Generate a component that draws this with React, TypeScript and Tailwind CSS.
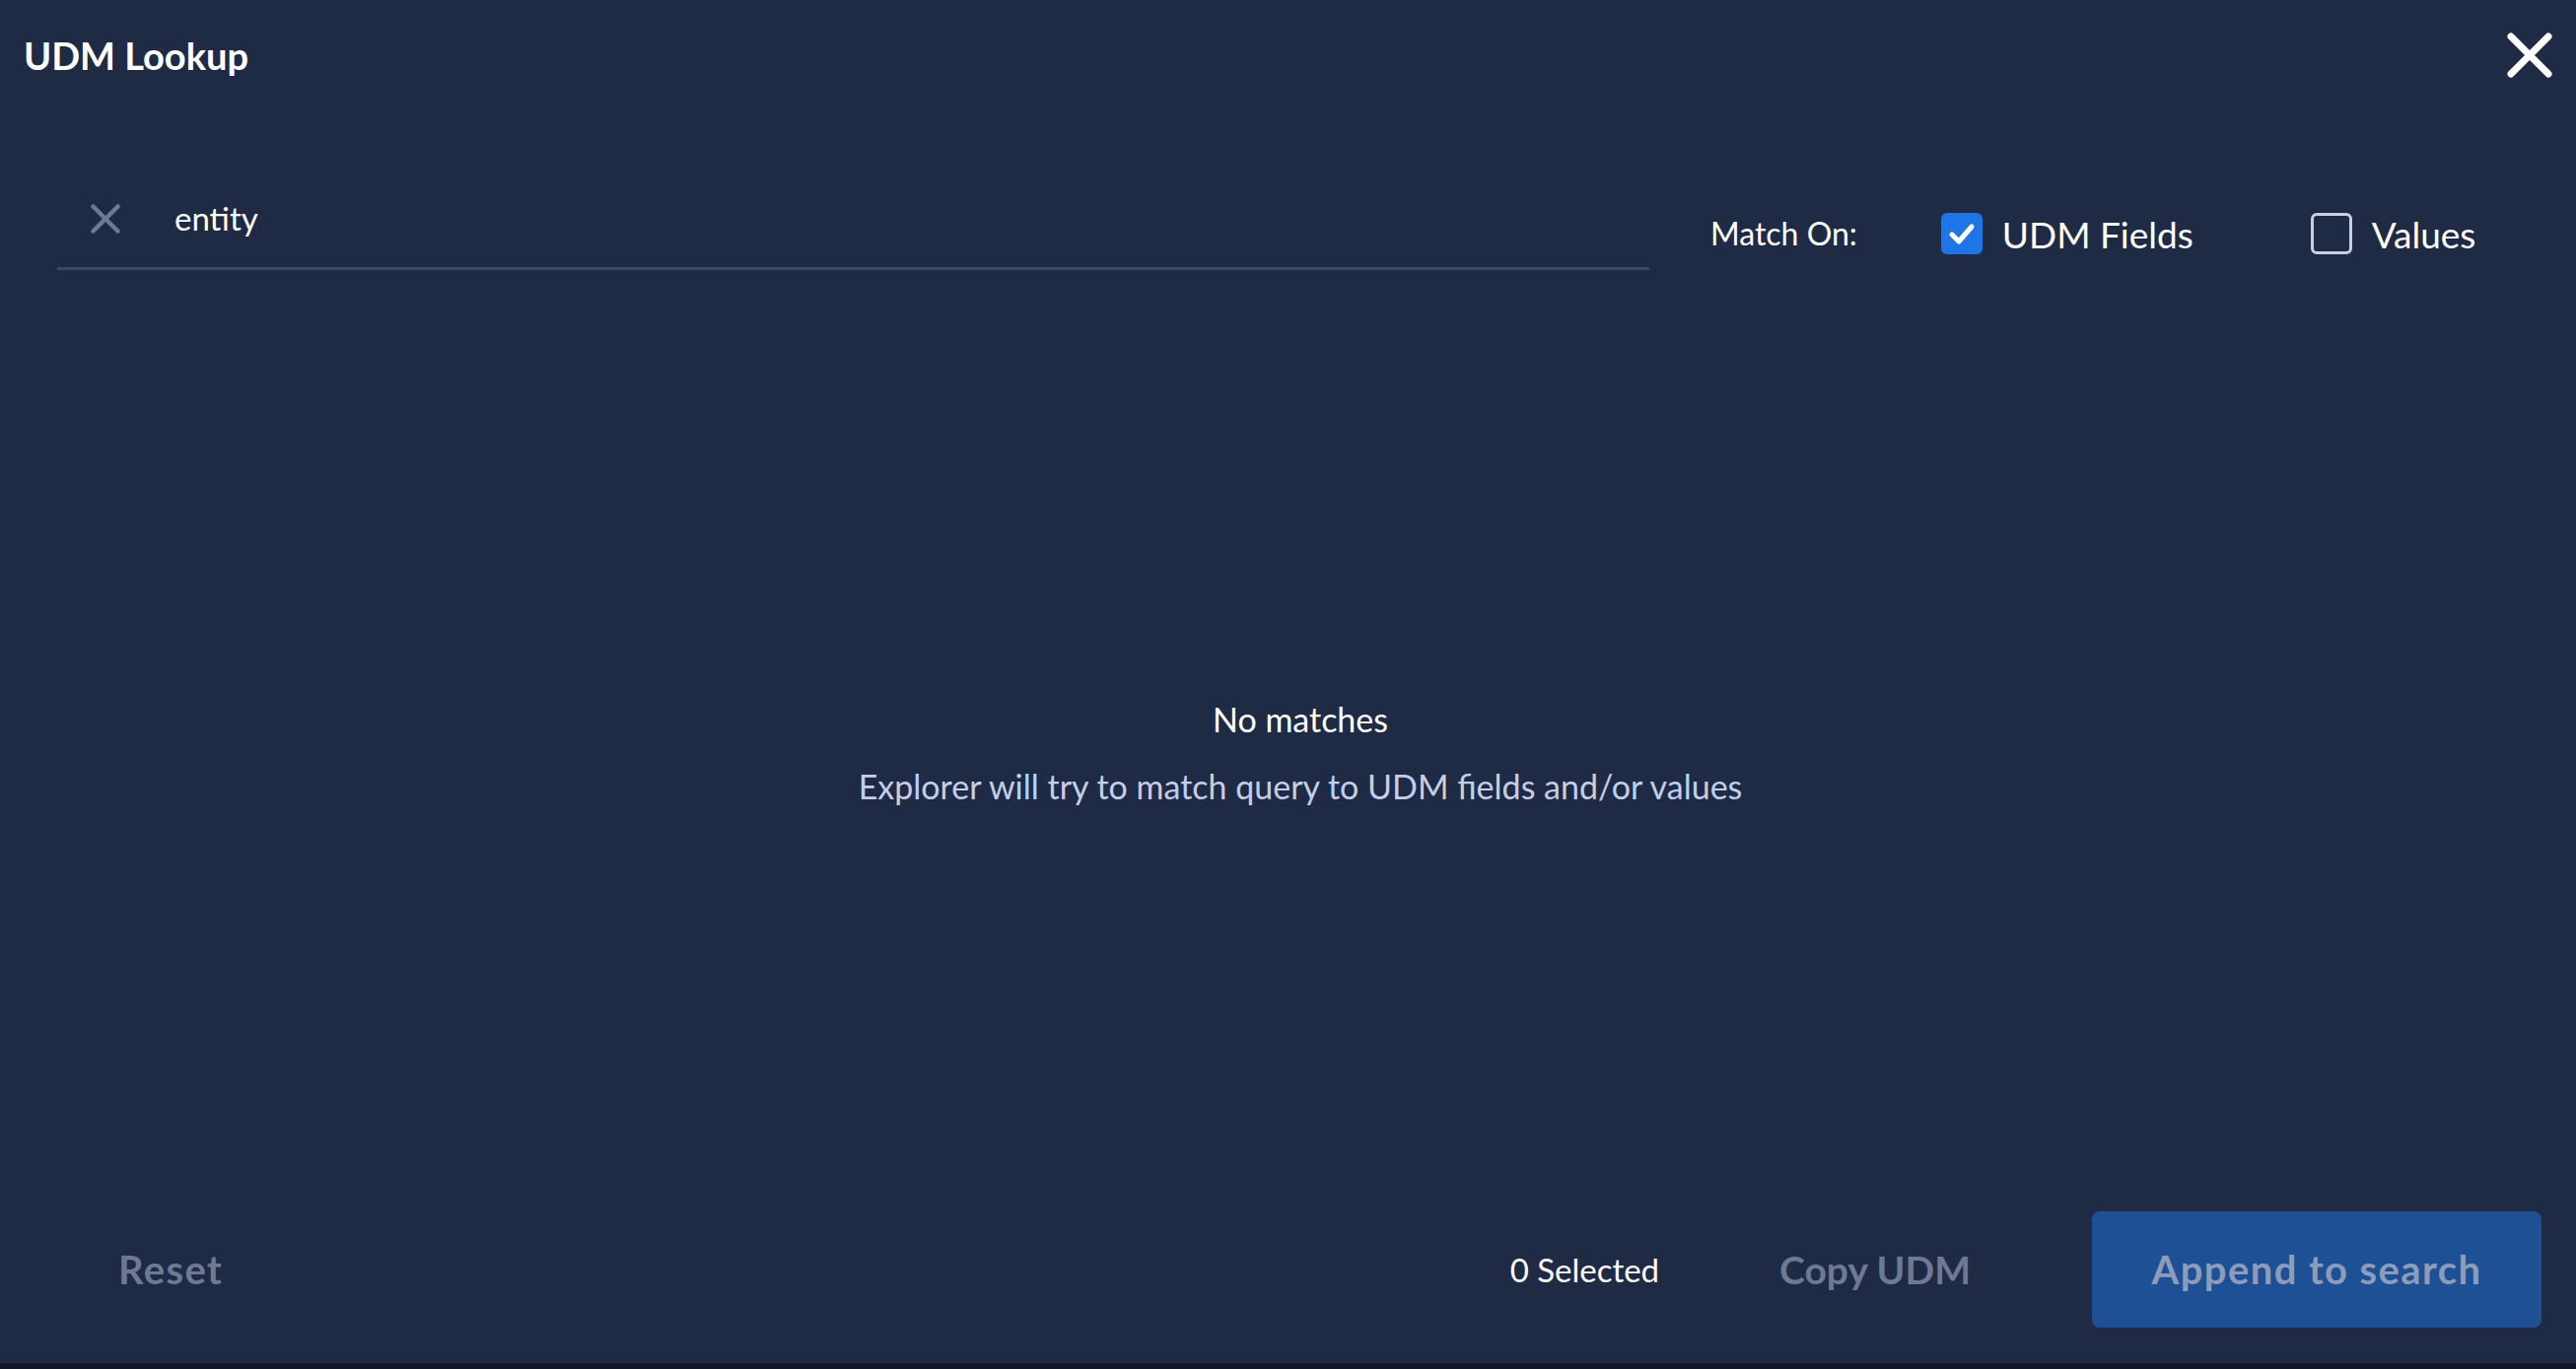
import React from "react";

const CloseIcon = () => (
  <svg width="46" height="46" viewBox="0 0 46 46" fill="none">
    <path
      d="M4 4 L42 42 M42 4 L4 42"
      stroke="#ffffff"
      strokeWidth="7"
      strokeLinecap="round"
    />
  </svg>
);

const ClearIcon = () => (
  <svg width="30" height="30" viewBox="0 0 30 30" fill="none">
    <path
      d="M2.5 2.5 L27.5 27.5 M27.5 2.5 L2.5 27.5"
      stroke="#6e7a95"
      strokeWidth="4.5"
      strokeLinecap="round"
    />
  </svg>
);

interface CheckProps {
  checked: boolean;
  label: string;
}

const Check: React.FC<CheckProps> = ({ checked, label }) => {
  return (
    <div className="flex items-center gap-x-[20px]">
      {checked ? (
        <div className="w-[42px] h-[42px] rounded-[6px] bg-[#1f74e6] flex items-center justify-center">
          <svg width="42" height="42" viewBox="0 0 42 42" fill="none">
            <path
              d="M11 22 L18 29 L31 14"
              stroke="#ffffff"
              strokeWidth="5"
              strokeLinecap="round"
              strokeLinejoin="round"
            />
          </svg>
        </div>
      ) : (
        <div className="w-[42px] h-[42px] rounded-[6px] border-[3px] border-[#c8d1e3]" />
      )}
      <span className="text-[37px] text-white leading-none">{label}</span>
    </div>
  );
};

export default function App() {
  return (
    <div
      className="w-full h-[1389px] bg-[#1f2a44] flex flex-col"
      style={{ fontFamily: "Lato, 'Open Sans', sans-serif" }}
    >
      {/* header */}
      <div className="h-[112px] flex items-center justify-between pl-[24px] pr-[24px]">
        <h1 className="text-[38px] font-bold text-white leading-none">UDM Lookup</h1>
        <button className="flex items-center justify-center">
          <CloseIcon />
        </button>
      </div>

      {/* search row */}
      <div className="mt-[60px] flex items-start">
        <div className="ml-[58px] w-[1615px] h-[102px] border-b-[3px] border-[#3c4869] flex items-center">
          <div className="ml-[34px]">
            <ClearIcon />
          </div>
          <span className="ml-[55px] text-[33px] text-white leading-none">entity</span>
        </div>
        <div className="mt-[44px] ml-[62px] flex items-center">
          <span className="text-[32px] text-white leading-none">Match On:</span>
          <div className="ml-[85px]">
            <Check checked label="UDM Fields" />
          </div>
          <div className="ml-[119px]">
            <Check checked={false} label="Values" />
          </div>
        </div>
      </div>

      {/* empty state */}
      <div className="flex-1 flex flex-col items-center justify-center pl-[25px] pt-[24px]">
        <p className="text-[34px] text-white leading-none">No matches</p>
        <p className="mt-[34px] text-[34px] text-[#c3cfea] leading-none">
          Explorer will try to match query to UDM fields and/or values
        </p>
      </div>

      {/* footer */}
      <div className="h-[118px] flex items-center pr-[35px]">
        <button className="ml-[120px] text-[40px] font-bold tracking-[1.4px] text-[#6d7a96] leading-none">
          Reset
        </button>
        <div className="flex-1" />
        <span className="text-[33px] text-white leading-none">0 Selected</span>
        <button className="ml-[122px] text-[39px] font-bold text-[#6d7a96] leading-none">
          Copy UDM
        </button>
        <button className="ml-[123px] w-[456px] h-[118px] rounded-[8px] bg-[#1e5095] text-[40px] font-bold tracking-[1.4px] text-[#8c9cba] leading-none">
          Append to search
        </button>
      </div>
      <div className="mt-[36px] h-[6px] bg-[#131827]" />
    </div>
  );
}
